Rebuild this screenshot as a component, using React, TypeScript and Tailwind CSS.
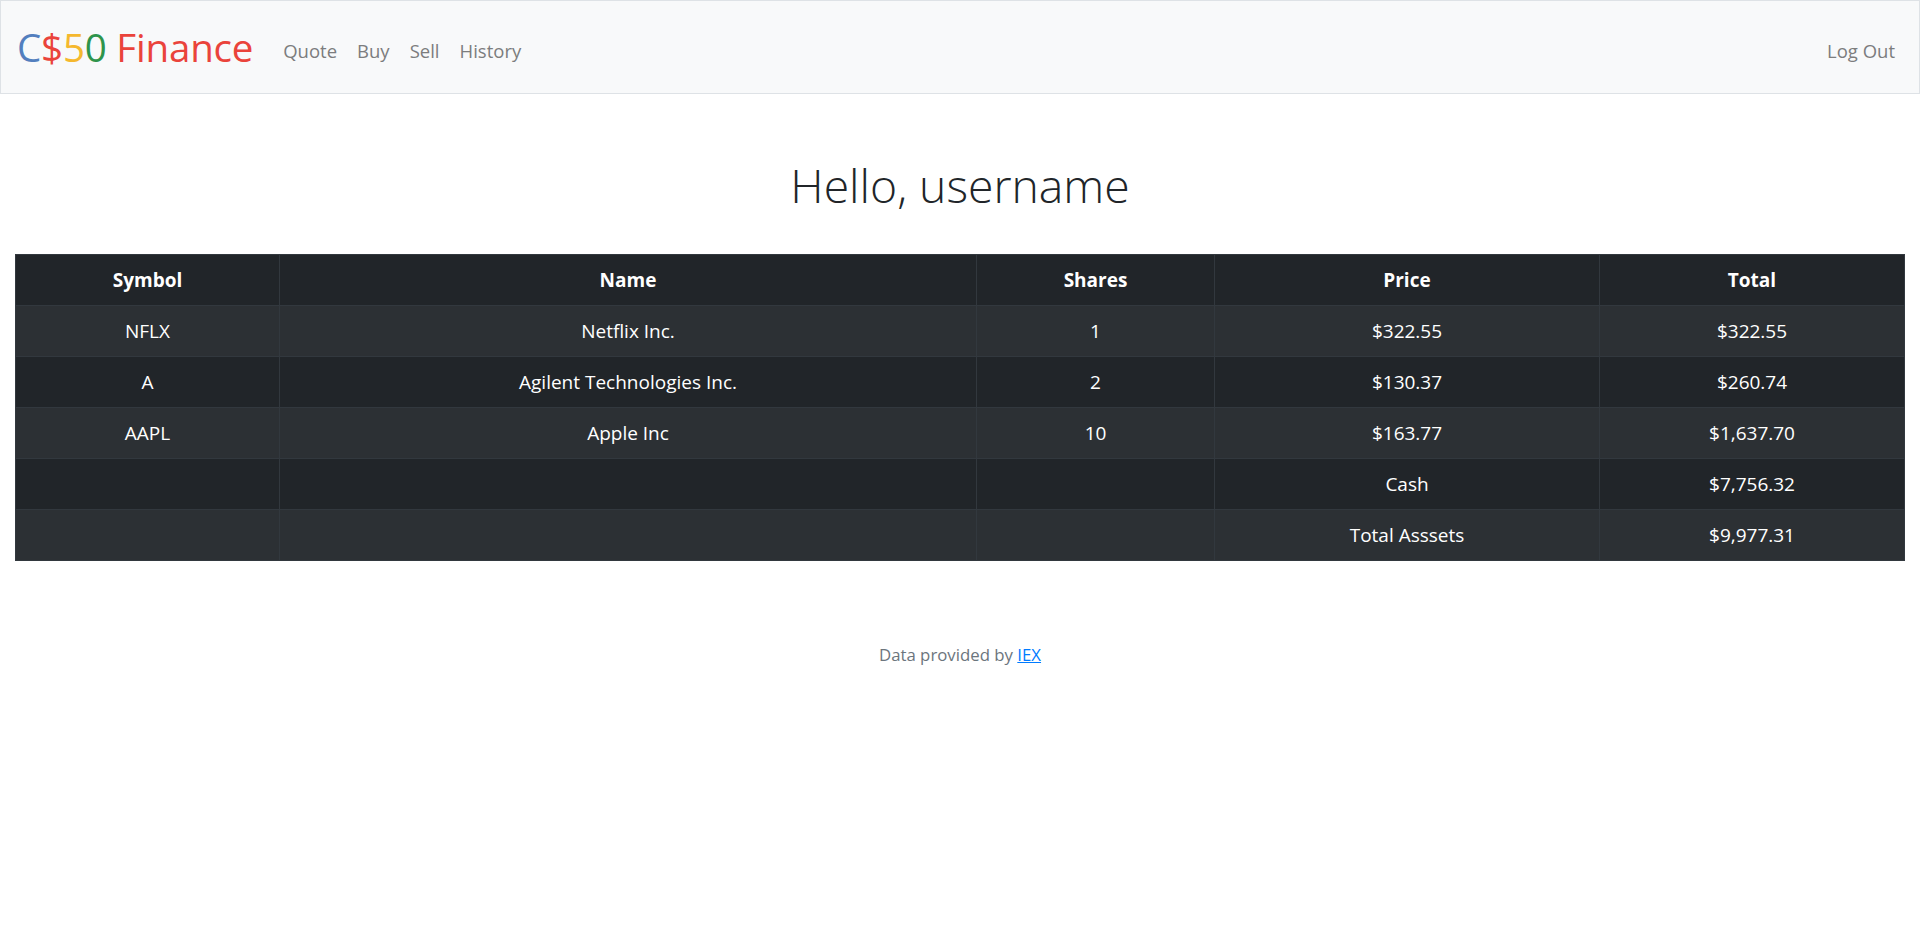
const rows = [
  { symbol: 'NFLX', name: 'Netflix Inc.', shares: '1', price: '$322.55', total: '$322.55' },
  { symbol: 'A', name: 'Agilent Technologies Inc.', shares: '2', price: '$130.37', total: '$260.74' },
  { symbol: 'AAPL', name: 'Apple Inc', shares: '10', price: '$163.77', total: '$1,637.70' },
  { symbol: '', name: '', shares: '', price: 'Cash', total: '$7,756.32' },
  { symbol: '', name: '', shares: '', price: 'Total Asssets', total: '$9,977.31' },
];

const cell = 'border border-[#32383e] px-3 py-[12px] leading-[26px] text-center';

export default function App() {
  return (
    <div className="min-h-screen bg-white font-['Open_Sans',sans-serif] text-[#212529]">
      <nav className="flex h-[94px] items-center border border-[#dee2e6] bg-[#f8f9fa] pl-[16px] pr-[24px]">
        <a className="text-[38.5px] leading-none tracking-[-0.2px]">
          <span className="text-[#537fbe]">C</span>
          <span className="text-[#ea433b]">$</span>
          <span className="text-[#f5b82e]">5</span>
          <span className="text-[#2e944b]">0</span>
          <span className="text-[#ea433b]"> Finance</span>
        </a>
        <ul className="ml-[20px] mt-[7px] flex items-center text-[18.5px] text-[#7c7d7e]">
          <li className="px-[10px]">Quote</li>
          <li className="px-[10px]">Buy</li>
          <li className="px-[10px]">Sell</li>
          <li className="px-[10px]">History</li>
        </ul>
        <div className="ml-auto mt-[7px] text-[18.5px] text-[#7c7d7e]">Log Out</div>
      </nav>

      <main className="px-[15px] pt-[61px]">
        <h1 className="mb-[37px] text-center text-[46.3px] font-light leading-[62px]">Hello, username</h1>
        <table className="w-full table-fixed border-collapse bg-[#212529] text-[19px] text-white">
          <thead>
            <tr>
              <th className={`${cell} w-[264px] font-bold`}>Symbol</th>
              <th className={`${cell} w-[697px] font-bold`}>Name</th>
              <th className={`${cell} w-[238px] font-bold`}>Shares</th>
              <th className={`${cell} w-[385px] font-bold`}>Price</th>
              <th className={`${cell} font-bold`}>Total</th>
            </tr>
          </thead>
          <tbody>
            {rows.map((r, i) => (
              <tr key={i} className={i % 2 === 0 ? 'bg-[#2c3034]' : 'bg-[#212529]'}>
                <td className={cell}>{r.symbol}</td>
                <td className={cell}>{r.name}</td>
                <td className={cell}>{r.shares}</td>
                <td className={cell}>{r.price}</td>
                <td className={cell}>{r.total}</td>
              </tr>
            ))}
          </tbody>
        </table>
      </main>

      <footer className="mt-[81px] text-center text-[16.8px] text-[#6c757d]">
        Data provided by{' '}
        <a className="text-[#007bff] underline">IEX</a>
      </footer>
    </div>
  );
}
